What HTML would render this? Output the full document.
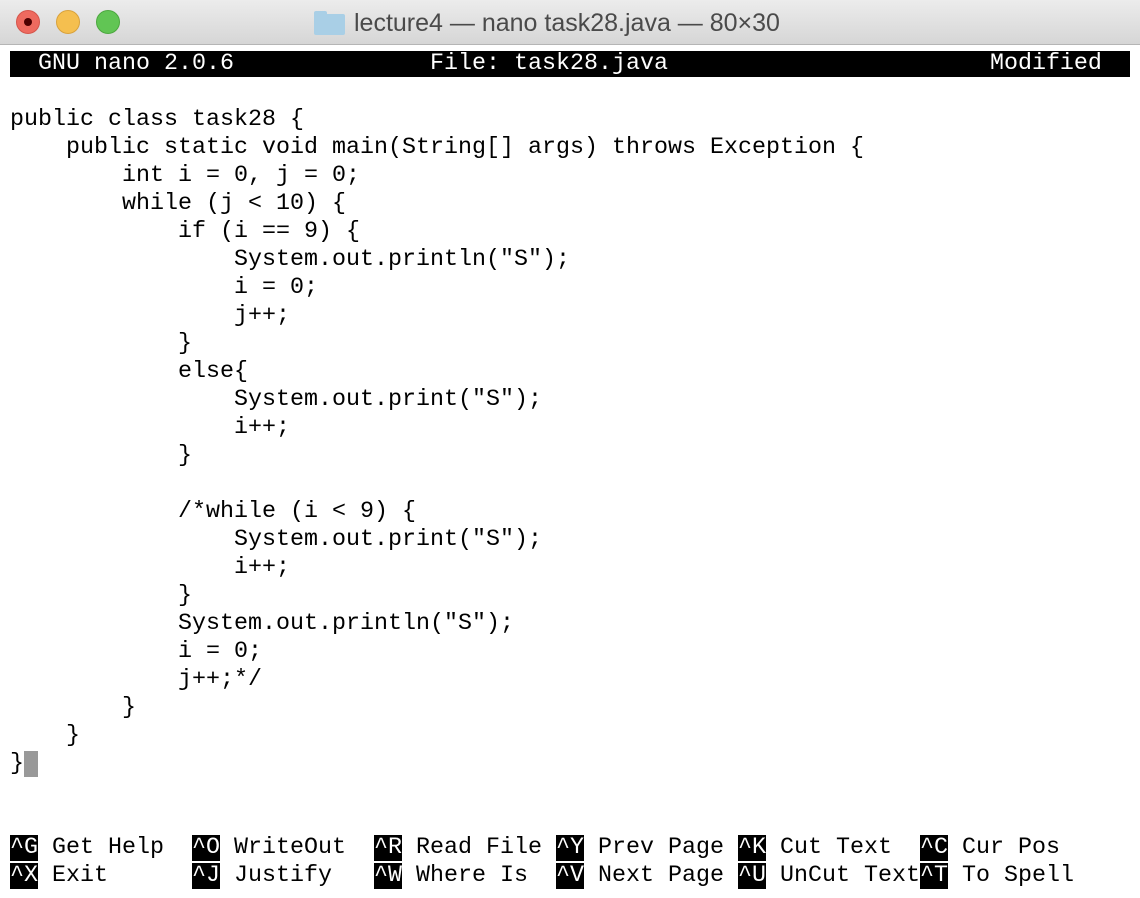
<!DOCTYPE html>
<html><head><meta charset="utf-8"><style>
html,body{margin:0;padding:0;background:#fff;width:1140px;height:898px;overflow:hidden}
.tb{position:absolute;left:0;top:0;width:1140px;height:44px;background:linear-gradient(#ececec,#d6d6d6);border-bottom:1px solid #b5b5b5}
.dot{position:absolute;top:10px;width:24px;height:24px;border-radius:50%;box-sizing:border-box}
.title{position:absolute;top:9px;left:354px;font:25px "Liberation Sans",sans-serif;color:#4a4a4a;white-space:nowrap}
.folder{position:absolute;left:314px;top:14px;width:31px;height:21px;background:#a9cfe6;border-radius:2px}
.folder:before{content:"";position:absolute;left:0;top:-3px;width:13px;height:5px;background:#a9cfe6;border-radius:2px 2px 0 0}
pre{position:absolute;left:10px;top:50px;margin:0;font:23.33px/28px "Liberation Mono",monospace;color:#000}
.inv{background:#000;color:#fff}
.cur{background:#999}
</style></head><body>
<div class="tb">
<div class="dot" style="left:16px;background:#ee6a5f;border:1px solid #d5554b"><div style="position:absolute;left:7px;top:7px;width:8px;height:8px;border-radius:50%;background:#4d0000"></div></div>
<div class="dot" style="left:56px;background:#f5bf4f;border:1px solid #d9a23c"></div>
<div class="dot" style="left:96px;background:#61c554;border:1px solid #4ca83f"></div>
<div class="folder"></div>
<div class="title">lecture4 — nano task28.java — 80×30</div>
</div>
<pre><span class="inv">  GNU nano 2.0.6              File: task28.java                       Modified  </span>

public class task28 {
    public static void main(String[] args) throws Exception {
        int i = 0, j = 0;
        while (j &lt; 10) {
            if (i == 9) {
                System.out.println("S");
                i = 0;
                j++;
            }
            else{
                System.out.print("S");
                i++;
            }

            /*while (i &lt; 9) {
                System.out.print("S");
                i++;
            }
            System.out.println("S");
            i = 0;
            j++;*/
        }
    }
}<span class="cur"> </span>


<span class="inv">^G</span> Get Help  <span class="inv">^O</span> WriteOut  <span class="inv">^R</span> Read File <span class="inv">^Y</span> Prev Page <span class="inv">^K</span> Cut Text  <span class="inv">^C</span> Cur Pos
<span class="inv">^X</span> Exit      <span class="inv">^J</span> Justify   <span class="inv">^W</span> Where Is  <span class="inv">^V</span> Next Page <span class="inv">^U</span> UnCut Text<span class="inv">^T</span> To Spell</pre>
</body></html>
